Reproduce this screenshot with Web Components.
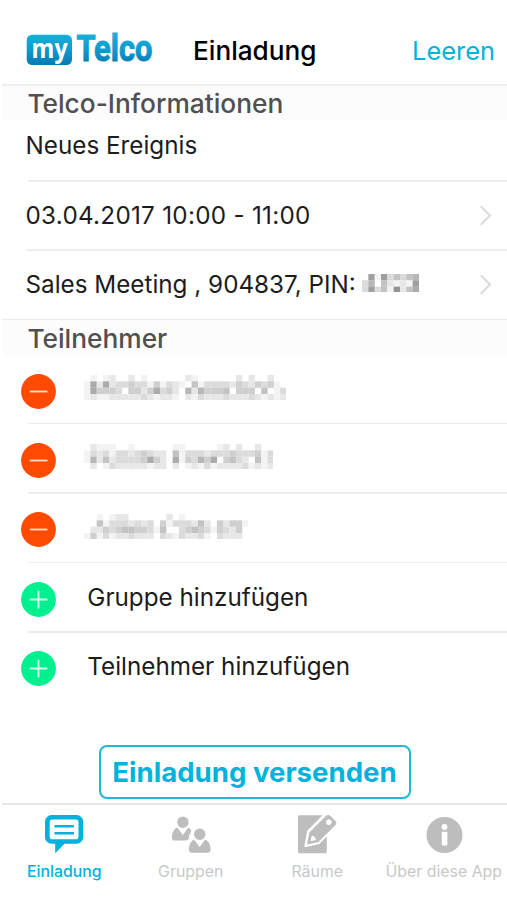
<!DOCTYPE html>
<html lang="de">
<head>
<meta charset="utf-8">
<title>myTelco</title>
<style>
  body {
    margin: 0;
    width: 507px;
    height: 900px;
    overflow: hidden;
    background: #fff;
    color: #1c1c1c;
    font-family: Inter, "Liberation Sans", sans-serif;
    --brand: #00b2dc;
    --rule: #ededed;
  }
</style>
</head>
<body>
<telco-app></telco-app>

<script>
class TelcoLogo extends HTMLElement {
  constructor() {
    super();
    this.attachShadow({ mode: 'open' }).innerHTML = `
      <style>
        :host { display: block; width: 128px; height: 50px; }
        svg { display: block; overflow: visible; }
      </style>
      <svg width="128" height="50" viewBox="0 -7 128 50">
        <defs>
          <linearGradient id="sky" x1="0" y1="2" x2="0" y2="33" gradientUnits="userSpaceOnUse">
            <stop offset="0" stop-color="#18b0da"/>
            <stop offset=".5" stop-color="#0c9ccd"/>
            <stop offset="1" stop-color="#0878b2"/>
          </linearGradient>
        </defs>
        <rect x="0.7" y="2.7" width="45.3" height="30.4" rx="5.5" fill="url(#sky)"/>
        <text x="5.6" y="25.6" font-family="Open Sans" font-weight="700" font-size="26.5" fill="#fff"
              textLength="36" lengthAdjust="spacingAndGlyphs">my</text>
        <text x="50.4" y="29.3" font-family="Roboto" font-weight="700" font-size="36.5" fill="url(#sky)"
              stroke="url(#sky)" stroke-width="1" textLength="76" lengthAdjust="spacingAndGlyphs">Telco</text>
      </svg>
    `;
  }
}
customElements.define('telco-logo', TelcoLogo);

class NavBar extends HTMLElement {
  constructor() {
    super();
    this.attachShadow({ mode: 'open' }).innerHTML = `
      <style>
        :host {
          display: flex;
          align-items: center;
          box-sizing: border-box;
          height: 86px;
          margin-left: 2px;
          padding: 16px 12px 0 24px;
          border-bottom: 2px solid #eee;
        }
        telco-logo { margin-top: -1px; }
        .title {
          margin-left: 39px;
          color: #000;
          font-size: 26.2px;
          font-weight: 500;
        }
        .action {
          margin-left: auto;
          color: var(--brand);
          font-size: 25.4px;
        }
      </style>
      <telco-logo></telco-logo>
      <span class="title"><slot></slot></span>
      <span class="action"><slot name="action"></slot></span>
    `;
  }
}
customElements.define('nav-bar', NavBar);

class SectionHeader extends HTMLElement {
  constructor() {
    super();
    this.attachShadow({ mode: 'open' }).innerHTML = `
      <style>
        :host {
          display: flex;
          align-items: center;
          box-sizing: border-box;
          height: var(--section-height, 34px);
          margin-left: 2px;
          padding: 1px 0 0 25.4px;
          background: #fcfcfc;
          color: #505050;
          font-size: 26.3px;
          font-weight: 500;
          line-height: 32px;
        }
      </style>
      <slot></slot>
    `;
  }
}
customElements.define('section-header', SectionHeader);

class ListRow extends HTMLElement {
  constructor() {
    super();
    this.attachShadow({ mode: 'open' }).innerHTML = `
      <style>
        :host {
          display: flex;
          align-items: center;
          box-sizing: border-box;
          position: relative;
          height: 69.5px;
          padding: 0 15px 1px 25.5px;
          font-size: 24.25px;
          white-space: nowrap;
        }
        /* the separator starts at the text inset and runs to the right edge */
        :host::after {
          content: "";
          position: absolute;
          left: var(--rule-left, 28px);
          right: 0;
          bottom: 0;
          height: 1.5px;
          background: var(--rule);
        }
        :host([last])::after { display: none; }
        svg { display: none; margin-left: auto; }
        :host([chevron]) svg { display: block; }
      </style>
      <slot></slot>
      <svg width="13" height="21" viewBox="0 0 13 21" fill="none" stroke="#dadada" stroke-width="2">
        <path d="M1.8 1.3 11 10.5 1.8 19.7"/>
      </svg>
    `;
  }
}
customElements.define('list-row', ListRow);

class RoundButton extends HTMLElement {
  connectedCallback() {
    const add = this.getAttribute('kind') === 'add';
    this.attachShadow({ mode: 'open' }).innerHTML = `
      <style>
        :host { display: block; margin: 4px 31.8px 0 -5px; }
        svg { display: block; }
      </style>
      <svg width="35" height="35" viewBox="0 0 35 35" stroke="#fff" stroke-width="1.8">
        <circle cx="17.5" cy="17.5" r="17.4" stroke="none" fill="${add ? '#00ef8f' : '#ff4a00'}"/>
        <path stroke-opacity=".85" d="M8.8 17.5h17.6${add ? 'M17.5 8.8v17.6' : ''}"/>
      </svg>
    `;
  }
}
customElements.define('round-button', RoundButton);

// Pixelated block: one digit per cell, 0 is empty and 9 the darkest grey
class PixelMask extends HTMLElement {
  connectedCallback() {
    const cell = 6.33;
    const rows = this.getAttribute('cells').trim().split(/\s+/);
    const cols = Math.max(...rows.map(row => row.length));
    let rects = '';
    rows.forEach((row, y) => {
      [...row].forEach((digit, x) => {
        if (digit === '0') return;
        const grey = 255 - digit * 12;
        rects += `<rect x="${x}" y="${y}" width="1.02" height="1.02" fill="rgb(${grey},${grey},${grey})"/>`;
      });
    });
    this.attachShadow({ mode: 'open' }).innerHTML = `
      <style>
        :host { display: block; }
        svg { display: block; }
      </style>
      <svg width="${cols * cell}" height="${rows.length * cell}" viewBox="0 0 ${cols} ${rows.length}">${rects}</svg>
    `;
  }
}
customElements.define('pixel-mask', PixelMask);

const ICONS = {
  message: `
    <path fill-rule="evenodd" d="M6.5 0h25.2a6.5 6.5 0 0 1 6.5 6.5v15.7a6.5 6.5 0 0 1-6.5 6.5H19.5L10.2 38.3V28.7H6.5A6.5 6.5 0 0 1 0 22.2V6.5A6.5 6.5 0 0 1 6.5 0zM7.5 4.6a2.8 2.8 0 0 0-2.8 2.8v14a2.8 2.8 0 0 0 2.8 2.8h23.2a2.8 2.8 0 0 0 2.8-2.8v-14a2.8 2.8 0 0 0-2.8-2.8z"/>
    <path d="M9.5 10h19.5v2.6H9.5zM9.5 17h19.5v2.6H9.5z"/>`,
  people: `
    <g transform="translate(.6 0)">
      <circle cx="11.3" cy="7.3" r="5.7"/>
      <path d="M5.5 12.6 11.3 20l5.2-7.2c2 .3 3.1 1.7 3.1 3.6l-1.5 3.1c-1 2-.8 3.2-1.3 5.1-.5.7-1.5 1-3 1H3.2C1 25.6.3 24.6.3 22.7c0-4.3 1.8-8.3 5.2-10.1z"/>
      <circle cx="28.2" cy="19.2" r="5.7"/>
      <path d="M22.3 24.6 28.1 32l5.4-7.4c3.5 1.5 5.5 5.4 5.5 9.9 0 2.2-1 3.3-3.2 3.3H20.6c-2.2 0-3.3-1-3.3-3.3 0-4.4 1.8-8.2 5-9.9z"/>
    </g>`,
  pencil: `
    <path d="M1.5.3h23.2L9.2 15.8 6.3 31.5l1 .8 14-3.2 7.5-7.6v15.3c0 .9-.6 1.4-1.5 1.4H1.5C.6 38.2 0 37.7 0 36.8V1.8C0 .9.6.3 1.5.3z"/>
    <path fill-rule="evenodd" d="M27.8 1.1c1.5-1.4 3.2-1.4 4.7 0l4.8 4.6c1.4 1.4 1.4 3.1 0 4.5L20.1 27.3 9 29.5l2.3-11.9zM13.9 20.4l-1.4 5.8 5.7-1.2-1.3-3zM30.8 4.5a2.7 2.7 0 1 0 .1 5.4 2.7 2.7 0 0 0-.1-5.4z"/>`,
  info: `
    <g transform="translate(1.5 0)">
      <circle cx="19" cy="20" r="18"/>
      <circle cx="19" cy="12" r="2.9" fill="#fff"/>
      <path fill="#fff" d="M16.3 16.7h5.6v12.7q0 1-1 1h-3.6q-1 0-1-1z"/>
    </g>`
};

class TabItem extends HTMLElement {
  connectedCallback() {
    this.attachShadow({ mode: 'open' }).innerHTML = `
      <style>
        :host {
          display: flex;
          flex: 1;
          flex-direction: column;
          align-items: center;
          gap: 7.3px;
          color: #c8c8c8;
          font-size: 15.9px;
          line-height: 22px;
          white-space: nowrap;
        }
        :host([active]) {
          margin-left: -1px;
          color: var(--brand);
          font-size: 15.8px;
          font-weight: 500;
        }
        svg { display: block; overflow: visible; fill: #bdbdbd; }
        :host([active]) svg { fill: var(--brand); }
      </style>
      <svg width="39" height="39" viewBox="0 0 39 39">${ICONS[this.getAttribute('icon')]}</svg>
      <slot></slot>
    `;
  }
}
customElements.define('tab-item', TabItem);

class TabBar extends HTMLElement {
  constructor() {
    super();
    this.attachShadow({ mode: 'open' }).innerHTML = `
      <style>
        :host {
          display: flex;
          box-sizing: border-box;
          height: 97px;
          margin-left: 2px;
          padding-top: 9.7px;
          border-top: 2px solid #e6e6e6;
        }
      </style>
      <slot></slot>
    `;
  }
}
customElements.define('tab-bar', TabBar);

class SendButton extends HTMLElement {
  constructor() {
    super();
    this.attachShadow({ mode: 'open' }).innerHTML = `
      <style>
        :host { display: flex; justify-content: center; }
        button {
          box-sizing: border-box;
          width: 312px;
          height: 54px;
          padding: 0;
          border: 2px solid #1fb8d8;
          border-radius: 8px;
          background: #fff;
          color: var(--brand);
          font: 700 27.6px Inter, sans-serif;
          white-space: nowrap;
        }
      </style>
      <button><slot></slot></button>
    `;
  }
}
customElements.define('send-button', SendButton);

class TelcoApp extends HTMLElement {
  constructor() {
    super();
    this.attachShadow({ mode: 'open' }).innerHTML = `
      <style>
        :host {
          display: flex;
          flex-direction: column;
          height: 900px;
        }
        .subject { height: 61.5px; padding-bottom: 11.5px; }
        .date { height: 69px; padding-bottom: 2px; letter-spacing: 0.27px; --rule-left: 26px; }
        .room { height: 69.5px; padding-bottom: 2.5px; --rule-left: 2px; }
        .room pixel-mask { margin-left: 6.5px; margin-top: -2px; }
        .people { --section-height: 36px; }
        .first { height: 68px; padding-bottom: 2px; }
        .person pixel-mask { margin-left: -3.8px; margin-top: -3px; }
        send-button { margin: auto 0 4px 2px; }
      </style>
      <nav-bar>Einladung<span slot="action">Leeren</span></nav-bar>

      <section-header>Telco-Informationen</section-header>
      <list-row class="subject">Neues Ereignis</list-row>
      <list-row class="date" chevron>03.04.2017 10:00 - 11:00</list-row>
      <list-row class="room" chevron>Sales Meeting , 904837, PIN:<pixel-mask cells="
        081835356
        360521218
        383519257"></pixel-mask></list-row>

      <section-header class="people">Teilnehmer</section-header>
      <list-row class="person first"><round-button kind="remove"></round-button><pixel-mask cells="
        01012002010000002100000020200200
        17272334331413210513333243243410
        17444304424734206264445044405013
        12112222232122102132223222321212"></pixel-mask></list-row>
      <list-row class="person"><round-button kind="remove"></round-button><pixel-mask cells="
        021110010000001100000120200200
        132313323432205133323334333413
        162523333474207143647045320513
        020132222212202012131222231212"></pixel-mask></list-row>
      <list-row class="person"><round-button kind="remove"></round-button><pixel-mask cells="
        00101220000002010000000000
        00513332323041333252042441
        02243455443150034543143240
        14131223222032132231032220"></pixel-mask></list-row>
      <list-row><round-button kind="add"></round-button>Gruppe hinzufügen</list-row>
      <list-row last><round-button kind="add"></round-button>Teilnehmer hinzufügen</list-row>

      <send-button>Einladung versenden</send-button>
      <tab-bar>
        <tab-item icon="message" active>Einladung</tab-item>
        <tab-item icon="people">Gruppen</tab-item>
        <tab-item icon="pencil">Räume</tab-item>
        <tab-item icon="info">Über diese App</tab-item>
      </tab-bar>
    `;
  }
}
customElements.define('telco-app', TelcoApp);
</script>
</body>
</html>
